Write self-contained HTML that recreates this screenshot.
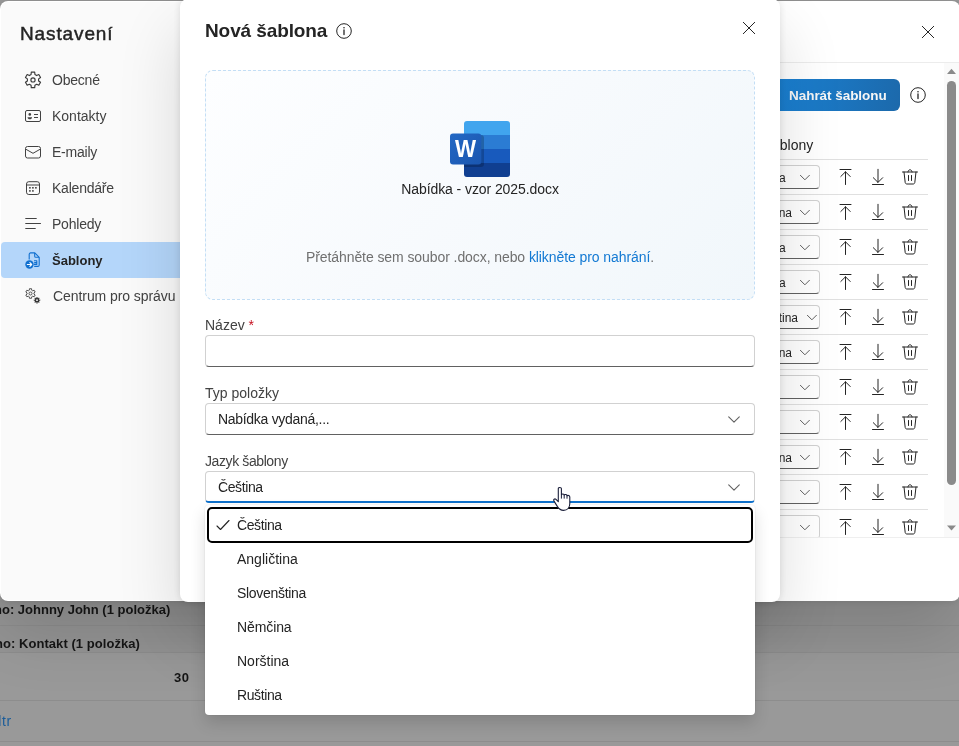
<!DOCTYPE html>
<html lang="cs">
<head>
<meta charset="utf-8">
<title>Nastavení – Nová šablona</title>
<style>
*{box-sizing:border-box;margin:0;padding:0}
html,body{width:959px;height:746px;overflow:hidden}
body{position:relative;font-family:"Liberation Sans",sans-serif;font-size:14px;color:#242424;background:#949494}
.abs{position:absolute}
.t{position:absolute;white-space:nowrap;line-height:1;will-change:transform}
/* background page */
#bg{position:absolute;left:0;top:0;width:959px;height:746px;background:#999}
.bgline{position:absolute;left:0;width:959px;height:1px;background:#8d8d8d}
/* settings dialog */
#settings{position:absolute;left:0;top:1px;width:960px;height:600px;border-radius:8px;background:#fff;overflow:hidden;box-shadow:0 0 8px rgba(0,0,0,.12),0 32px 64px rgba(0,0,0,.14)}
#side{position:absolute;left:1px;top:1px;width:230px;height:598px;background:#fafafa;border-radius:7px 0 0 7px}
.nav{position:absolute;left:0;width:230px;height:36px}
.nav svg{position:absolute;left:23px;top:8px;width:20px;height:20px}
.nav .t{left:52px;top:11px;font-size:14px;color:#424242;letter-spacing:-.22px}
.nav.sel{left:1px;background:#b4d6fa;border-radius:4px 0 0 4px}
.nav.sel .t{color:#242424;font-weight:bold;left:51px;font-size:13px;letter-spacing:0;top:12px}
.nav.sel svg{left:22px}
/* right panel */
.rowline{position:absolute;left:700px;width:228px;height:1px;background:#e0e0e0}
.sel2{position:absolute;left:700px;width:120px;height:24px;border:1px solid #d1d1d1;border-bottom-color:#616161;border-radius:4px;background:#fff}
.sel2 .t{top:6px;font-size:12px;color:#242424}
.sel2 svg{position:absolute;right:6px;top:5px;width:14px;height:14px}
.ic{position:absolute;width:20px;height:20px}
/* front dialog */
#dlg{position:absolute;left:180px;top:-1px;width:600px;height:603px;border-radius:8px;background:#fff;box-shadow:0 0 8px rgba(0,0,0,.12),0 32px 64px rgba(0,0,0,.14)}
#drop{position:absolute;left:205px;top:70px;width:550px;height:230px;border:1px dashed #c3def5;border-radius:8px;background:linear-gradient(135deg,#fdfeff 0%,#f7fafd 50%,#f1f7fb 100%)}
.lbl{font-size:14px;color:#424242}
.field{position:absolute;left:205px;width:550px;height:32px;border:1px solid #d1d1d1;border-bottom-color:#616161;border-radius:4px;background:#fff}
.field .t{left:12px;top:8px;font-size:14px;color:#242424}
.field svg{position:absolute;right:10px;top:6px;width:20px;height:20px}
#list{position:absolute;left:205px;top:505px;width:550px;height:210px;border-radius:4px;background:#fff;box-shadow:0 0 2px rgba(0,0,0,.12),0 8px 16px rgba(0,0,0,.14)}
.opt{will-change:transform;position:absolute;left:32px;font-size:14px;color:#242424;white-space:nowrap;line-height:1}
</style>
</head>
<body>
<div id="bg">
  <div class="abs" style="left:0;top:600px;width:959px;height:52px;background:#949494"></div>
  <div class="bgline" style="top:625px"></div>
  <div class="bgline" style="top:652px"></div>
  <div class="bgline" style="top:700px"></div>
  <div class="bgline" style="top:741px"></div>
  <div class="t" style="left:-6px;top:603px;font-size:13px;font-weight:bold;color:#161616">ho: Johnny John (1 položka)</div>
  <div class="t" style="left:-4.700px;top:637px;font-size:13px;font-weight:bold;color:#161616;letter-spacing:.05px">ho: Kontakt (1 položka)</div>
  <div class="t" style="left:174px;top:671px;font-size:13px;font-weight:bold;color:#161616;letter-spacing:.4px">30</div>
  <div class="t" style="left:-10px;top:714px;font-size:14px;color:#1a5c99;letter-spacing:.6px">filtr</div>
</div>

<div id="settings">
  <div id="side"></div>
  <div class="t" style="left:19.600px;top:23px;font-size:19px;letter-spacing:.88px;color:#242424;-webkit-text-stroke:.45px #242424">Nastavení</div>

  <div class="nav" style="top:61px"><svg viewBox="0 0 20 20" fill="none" stroke="#3a3a3a" stroke-width="1.150" stroke-linejoin="round"><path d="M8.28 2.19 L11.72 2.19 L11.93 4.54 L13.68 5.55 L15.82 4.55 L17.54 7.54 L15.61 8.89 L15.61 10.91 L17.54 12.26 L15.82 15.25 L13.68 14.25 L11.93 15.26 L11.72 17.61 L8.28 17.61 L8.07 15.26 L6.32 14.25 L4.18 15.25 L2.46 12.26 L4.39 10.91 L4.39 8.89 L2.46 7.54 L4.18 4.55 L6.32 5.55 L8.07 4.54Z"/><circle cx="10" cy="9.900" r="2.100"/></svg><div class="t">Obecné</div></div>
  <div class="nav" style="top:97px"><svg viewBox="0 0 20 20" fill="none" stroke="#424242" stroke-width="1"><rect x="2.500" y="4.500" width="15" height="11" rx="1.500"/><circle cx="6.800" cy="8.400" r="1.300" fill="#424242" stroke="none"/><path d="M4.600 11.300h4.400v.5c0 .9-1 1.500-2.200 1.500s-2.200-.600-2.200-1.500z" fill="#424242" stroke="none"/><path d="M11 8.500h4M11 11.500h4"/></svg><div class="t" style="left:52.400px;letter-spacing:0">Kontakty</div></div>
  <div class="nav" style="top:133px"><svg viewBox="0 0 20 20" fill="none" stroke="#424242" stroke-width="1" stroke-linejoin="round"><rect x="2.500" y="4.500" width="15" height="11.500" rx="2"/><path d="M2.800 7.200L10 11.300l7.200-4.100"/></svg><div class="t">E-maily</div></div>
  <div class="nav" style="top:169px"><svg viewBox="0 0 20 20" fill="none" stroke="#424242" stroke-width="1"><rect x="3.500" y="3.700" width="13" height="12.800" rx="2.300"/><path d="M3.500 7h13"/><g fill="#424242" stroke="none"><rect x="6.100" y="9" width="1.600" height="1.600"/><rect x="9.100" y="9" width="1.600" height="1.600"/><rect x="12.100" y="9" width="1.600" height="1.600"/><rect x="6.100" y="12.100" width="1.600" height="1.600"/><rect x="9.100" y="12.100" width="1.600" height="1.600"/></g></svg><div class="t">Kalendáře</div></div>
  <div class="nav" style="top:205px"><svg viewBox="0 0 20 20" fill="none" stroke="#424242" stroke-width="1" stroke-linecap="round"><path d="M2.700 4.500h10.600M2.700 9.500h14.800M2.700 14.500h9.600"/></svg><div class="t">Pohledy</div></div>
  <div class="nav sel" style="top:241px"><svg viewBox="0 0 20 20" fill="none" stroke="#1170cf" stroke-width="1.100" stroke-linejoin="round"><path d="M6.200 9.500V4.300c0-.8.600-1.400 1.400-1.400h4.200l4.400 4.400v7.700c0 .8-.600 1.400-1.400 1.400h-3.600"/><path d="M11.700 3v3.200c0 .6.500 1.100 1.100 1.100h3.200"/><path d="M11 10.800h2.800v3.600H11M11.200 12.600h2.400"/><circle cx="6.500" cy="14.500" r="4.200" fill="#1170cf" stroke="none"/><path d="M4.300 14.500h4.200M6.900 12.700l1.800 1.800-1.800 1.800" stroke="#fff" stroke-width="1.100" stroke-linecap="round"/></svg><div class="t">Šablony</div></div>
  <div class="nav" style="top:277px"><svg viewBox="0 0 20 20" fill="none" stroke="#424242" stroke-width=".9" stroke-linejoin="round"><path d="M6.43 2.72 L8.57 2.72 L8.69 4.21 L9.76 4.83 L11.11 4.18 L12.18 6.03 L10.94 6.88 L10.94 8.12 L12.18 8.97 L11.11 10.82 L9.76 10.17 L8.69 10.79 L8.57 12.28 L6.43 12.28 L6.31 10.79 L5.24 10.17 L3.89 10.82 L2.82 8.97 L4.06 8.12 L4.06 6.88 L2.82 6.03 L3.89 4.18 L5.24 4.83 L6.31 4.21Z"/><circle cx="7.500" cy="7.500" r="1.500"/><path d="M13.36 10.96 L14.64 10.96 L14.51 12.06 L15.15 12.32 L15.83 11.46 L16.74 12.37 L15.88 13.05 L16.14 13.69 L17.24 13.56 L17.24 14.84 L16.14 14.71 L15.88 15.35 L16.74 16.03 L15.83 16.94 L15.15 16.08 L14.51 16.34 L14.64 17.44 L13.36 17.44 L13.49 16.34 L12.85 16.08 L12.17 16.94 L11.26 16.03 L12.12 15.35 L11.86 14.71 L10.76 14.84 L10.76 13.56 L11.86 13.69 L12.12 13.05 L11.26 12.37 L12.17 11.46 L12.85 12.32 L13.49 12.06Z" fill="#333" stroke="none"/><circle cx="14" cy="14.200" r=".9" fill="#fafafa" stroke="none"/></svg><div class="t" style="left:53px;letter-spacing:-.07px">Centrum pro správu</div></div>

  <!-- right panel -->
  <svg class="ic" style="left:918px;top:21px" viewBox="0 0 20 20" fill="none" stroke="#242424" stroke-width="1" stroke-linecap="round"><path d="M4.300 4.300l11.400 11.400M15.700 4.300L4.300 15.700"/></svg>
  <div class="abs" style="left:700px;top:61px;width:260px;height:1px;background:#ececec"></div>
  <div class="abs" style="left:770px;top:78px;width:130px;height:32px;border-radius:6px;background:linear-gradient(100deg,#1a82d6 0%,#1b7bc9 30%,#1c69ab 100%)"></div>
  <div class="t" style="left:789px;top:87.500px;font-size:13.500px;font-weight:bold;color:#f6f6f6;letter-spacing:-.04px">Nahrát šablonu</div>
  <svg class="ic" style="left:908px;top:84px" viewBox="0 0 20 20" fill="none" stroke="#242424" stroke-width="1"><circle cx="10" cy="10" r="7.300"/><path d="M10 9v4.500" stroke-width="1.300" stroke-linecap="round"/><circle cx="10" cy="6.700" r=".8" fill="#242424" stroke="none"/></svg>
  <div class="t" style="left:765px;top:137px;font-size:14px;color:#242424">šablony</div>

  <!-- scrollbar -->
  <div class="abs" style="left:944px;top:62px;width:16px;height:474px;background:#fafafa"></div>
  <div class="abs" style="left:947px;top:80px;width:9px;height:404px;border-radius:5px;background:#8a8a8a"></div>
  <svg class="abs" style="left:946px;top:67px;width:11px;height:7px" viewBox="0 0 11 7"><path d="M1 6L5.500 .8 10 6z" fill="#8a8a8a"/></svg>
  <svg class="abs" style="left:946px;top:523.600px;width:11px;height:7px" viewBox="0 0 11 7"><path d="M1 .4L5.500 5.600 10 .4z" fill="#8a8a8a"/></svg>

  <div id="rows">
  <div class="rowline" style="top:158px"></div>
  <div class="sel2" style="top:164px"><div class="t" style="right:33.5px">Čeština</div><svg viewBox="0 0 14 14" fill="none" stroke="#616161" stroke-width="1" stroke-linecap="round" stroke-linejoin="round"><path d="M1.400 4.300l4.500 4.500 4.500-4.500"/></svg></div>
  <svg class="ic" style="left:835px;top:166px" viewBox="0 0 20 20" fill="none" stroke="#242424" stroke-width="1" stroke-linecap="round" stroke-linejoin="round"><path d="M5 2.500h11M10.500 17.500V4.800M5.800 9.500l4.700-4.700 4.700 4.700"/></svg><svg class="ic" style="left:868px;top:166px" viewBox="0 0 20 20" fill="none" stroke="#242424" stroke-width="1" stroke-linecap="round" stroke-linejoin="round"><path d="M4.500 17.500h11M10 2.300v13M5.300 10.700l4.700 4.700 4.700-4.700"/></svg><svg class="ic" style="left:900px;top:166px" viewBox="0 0 20 20" fill="none" stroke="#242424" stroke-width="1" stroke-linecap="round" stroke-linejoin="round"><path d="M2.500 5h15M8 5c0-1.300.8-2.200 2-2.200s2 .9 2 2.200M4 5l1.200 10.500c.1.900.8 1.500 1.700 1.500h6.200c.9 0 1.600-.600 1.700-1.500L16 5M8.500 8.500v5M11.500 8.500v5"/></svg>
  <div class="rowline" style="top:193px"></div>
  <div class="sel2" style="top:199px"><div class="t" style="right:27.2px">Angličtina</div><svg viewBox="0 0 14 14" fill="none" stroke="#616161" stroke-width="1" stroke-linecap="round" stroke-linejoin="round"><path d="M1.400 4.300l4.500 4.500 4.500-4.500"/></svg></div>
  <svg class="ic" style="left:835px;top:201px" viewBox="0 0 20 20" fill="none" stroke="#242424" stroke-width="1" stroke-linecap="round" stroke-linejoin="round"><path d="M5 2.500h11M10.500 17.500V4.800M5.800 9.500l4.700-4.700 4.700 4.700"/></svg><svg class="ic" style="left:868px;top:201px" viewBox="0 0 20 20" fill="none" stroke="#242424" stroke-width="1" stroke-linecap="round" stroke-linejoin="round"><path d="M4.500 17.500h11M10 2.300v13M5.300 10.700l4.700 4.700 4.700-4.700"/></svg><svg class="ic" style="left:900px;top:201px" viewBox="0 0 20 20" fill="none" stroke="#242424" stroke-width="1" stroke-linecap="round" stroke-linejoin="round"><path d="M2.500 5h15M8 5c0-1.300.8-2.200 2-2.200s2 .9 2 2.200M4 5l1.200 10.500c.1.900.8 1.500 1.700 1.500h6.200c.9 0 1.600-.600 1.700-1.500L16 5M8.500 8.500v5M11.500 8.500v5"/></svg>
  <div class="rowline" style="top:228px"></div>
  <div class="sel2" style="top:234px"><div class="t" style="right:33.5px">Čeština</div><svg viewBox="0 0 14 14" fill="none" stroke="#616161" stroke-width="1" stroke-linecap="round" stroke-linejoin="round"><path d="M1.400 4.300l4.500 4.500 4.500-4.500"/></svg></div>
  <svg class="ic" style="left:835px;top:236px" viewBox="0 0 20 20" fill="none" stroke="#242424" stroke-width="1" stroke-linecap="round" stroke-linejoin="round"><path d="M5 2.500h11M10.500 17.500V4.800M5.800 9.500l4.700-4.700 4.700 4.700"/></svg><svg class="ic" style="left:868px;top:236px" viewBox="0 0 20 20" fill="none" stroke="#242424" stroke-width="1" stroke-linecap="round" stroke-linejoin="round"><path d="M4.500 17.500h11M10 2.300v13M5.300 10.700l4.700 4.700 4.700-4.700"/></svg><svg class="ic" style="left:900px;top:236px" viewBox="0 0 20 20" fill="none" stroke="#242424" stroke-width="1" stroke-linecap="round" stroke-linejoin="round"><path d="M2.500 5h15M8 5c0-1.300.8-2.200 2-2.200s2 .9 2 2.200M4 5l1.200 10.500c.1.900.8 1.500 1.700 1.500h6.200c.9 0 1.600-.600 1.700-1.500L16 5M8.500 8.500v5M11.500 8.500v5"/></svg>
  <div class="rowline" style="top:263px"></div>
  <div class="sel2" style="top:269px"><div class="t" style="right:33.5px">Čeština</div><svg viewBox="0 0 14 14" fill="none" stroke="#616161" stroke-width="1" stroke-linecap="round" stroke-linejoin="round"><path d="M1.400 4.300l4.500 4.500 4.500-4.500"/></svg></div>
  <svg class="ic" style="left:835px;top:271px" viewBox="0 0 20 20" fill="none" stroke="#242424" stroke-width="1" stroke-linecap="round" stroke-linejoin="round"><path d="M5 2.500h11M10.500 17.500V4.800M5.800 9.500l4.700-4.700 4.700 4.700"/></svg><svg class="ic" style="left:868px;top:271px" viewBox="0 0 20 20" fill="none" stroke="#242424" stroke-width="1" stroke-linecap="round" stroke-linejoin="round"><path d="M4.500 17.500h11M10 2.300v13M5.300 10.700l4.700 4.700 4.700-4.700"/></svg><svg class="ic" style="left:900px;top:271px" viewBox="0 0 20 20" fill="none" stroke="#242424" stroke-width="1" stroke-linecap="round" stroke-linejoin="round"><path d="M2.500 5h15M8 5c0-1.300.8-2.200 2-2.200s2 .9 2 2.200M4 5l1.200 10.500c.1.900.8 1.500 1.700 1.500h6.200c.9 0 1.600-.600 1.700-1.500L16 5M8.500 8.500v5M11.500 8.500v5"/></svg>
  <div class="rowline" style="top:298px"></div>
  <div class="sel2" style="top:304px"><div class="t" style="right:21px">Slovenština</div><svg style="right:-1px" viewBox="0 0 14 14" fill="none" stroke="#616161" stroke-width="1" stroke-linecap="round" stroke-linejoin="round"><path d="M1.400 4.300l4.500 4.500 4.500-4.500"/></svg></div>
  <svg class="ic" style="left:835px;top:306px" viewBox="0 0 20 20" fill="none" stroke="#242424" stroke-width="1" stroke-linecap="round" stroke-linejoin="round"><path d="M5 2.500h11M10.500 17.500V4.800M5.800 9.500l4.700-4.700 4.700 4.700"/></svg><svg class="ic" style="left:868px;top:306px" viewBox="0 0 20 20" fill="none" stroke="#242424" stroke-width="1" stroke-linecap="round" stroke-linejoin="round"><path d="M4.500 17.500h11M10 2.300v13M5.300 10.700l4.700 4.700 4.700-4.700"/></svg><svg class="ic" style="left:900px;top:306px" viewBox="0 0 20 20" fill="none" stroke="#242424" stroke-width="1" stroke-linecap="round" stroke-linejoin="round"><path d="M2.500 5h15M8 5c0-1.300.8-2.200 2-2.200s2 .9 2 2.200M4 5l1.200 10.500c.1.900.8 1.500 1.700 1.500h6.200c.9 0 1.600-.600 1.700-1.500L16 5M8.500 8.500v5M11.500 8.500v5"/></svg>
  <div class="rowline" style="top:333px"></div>
  <div class="sel2" style="top:339px"><div class="t" style="right:27.2px">Angličtina</div><svg viewBox="0 0 14 14" fill="none" stroke="#616161" stroke-width="1" stroke-linecap="round" stroke-linejoin="round"><path d="M1.400 4.300l4.500 4.500 4.500-4.500"/></svg></div>
  <svg class="ic" style="left:835px;top:341px" viewBox="0 0 20 20" fill="none" stroke="#242424" stroke-width="1" stroke-linecap="round" stroke-linejoin="round"><path d="M5 2.500h11M10.500 17.500V4.800M5.800 9.500l4.700-4.700 4.700 4.700"/></svg><svg class="ic" style="left:868px;top:341px" viewBox="0 0 20 20" fill="none" stroke="#242424" stroke-width="1" stroke-linecap="round" stroke-linejoin="round"><path d="M4.500 17.500h11M10 2.300v13M5.300 10.700l4.700 4.700 4.700-4.700"/></svg><svg class="ic" style="left:900px;top:341px" viewBox="0 0 20 20" fill="none" stroke="#242424" stroke-width="1" stroke-linecap="round" stroke-linejoin="round"><path d="M2.500 5h15M8 5c0-1.300.8-2.200 2-2.200s2 .9 2 2.200M4 5l1.200 10.500c.1.900.8 1.500 1.700 1.500h6.200c.9 0 1.600-.600 1.700-1.500L16 5M8.500 8.500v5M11.500 8.500v5"/></svg>
  <div class="rowline" style="top:368px"></div>
  <div class="sel2" style="top:374px"><svg viewBox="0 0 14 14" fill="none" stroke="#616161" stroke-width="1" stroke-linecap="round" stroke-linejoin="round"><path d="M1.400 4.300l4.500 4.500 4.500-4.500"/></svg></div>
  <svg class="ic" style="left:835px;top:376px" viewBox="0 0 20 20" fill="none" stroke="#242424" stroke-width="1" stroke-linecap="round" stroke-linejoin="round"><path d="M5 2.500h11M10.500 17.500V4.800M5.800 9.500l4.700-4.700 4.700 4.700"/></svg><svg class="ic" style="left:868px;top:376px" viewBox="0 0 20 20" fill="none" stroke="#242424" stroke-width="1" stroke-linecap="round" stroke-linejoin="round"><path d="M4.500 17.500h11M10 2.300v13M5.300 10.700l4.700 4.700 4.700-4.700"/></svg><svg class="ic" style="left:900px;top:376px" viewBox="0 0 20 20" fill="none" stroke="#242424" stroke-width="1" stroke-linecap="round" stroke-linejoin="round"><path d="M2.500 5h15M8 5c0-1.300.8-2.200 2-2.200s2 .9 2 2.200M4 5l1.200 10.500c.1.900.8 1.500 1.700 1.500h6.200c.9 0 1.600-.600 1.700-1.500L16 5M8.500 8.500v5M11.500 8.500v5"/></svg>
  <div class="rowline" style="top:403px"></div>
  <div class="sel2" style="top:409px"><svg viewBox="0 0 14 14" fill="none" stroke="#616161" stroke-width="1" stroke-linecap="round" stroke-linejoin="round"><path d="M1.400 4.300l4.500 4.500 4.500-4.500"/></svg></div>
  <svg class="ic" style="left:835px;top:411px" viewBox="0 0 20 20" fill="none" stroke="#242424" stroke-width="1" stroke-linecap="round" stroke-linejoin="round"><path d="M5 2.500h11M10.500 17.500V4.800M5.800 9.500l4.700-4.700 4.700 4.700"/></svg><svg class="ic" style="left:868px;top:411px" viewBox="0 0 20 20" fill="none" stroke="#242424" stroke-width="1" stroke-linecap="round" stroke-linejoin="round"><path d="M4.500 17.500h11M10 2.300v13M5.300 10.700l4.700 4.700 4.700-4.700"/></svg><svg class="ic" style="left:900px;top:411px" viewBox="0 0 20 20" fill="none" stroke="#242424" stroke-width="1" stroke-linecap="round" stroke-linejoin="round"><path d="M2.500 5h15M8 5c0-1.300.8-2.200 2-2.200s2 .9 2 2.200M4 5l1.200 10.500c.1.900.8 1.500 1.700 1.500h6.200c.9 0 1.600-.600 1.700-1.500L16 5M8.500 8.500v5M11.500 8.500v5"/></svg>
  <div class="rowline" style="top:438px"></div>
  <div class="sel2" style="top:444px"><div class="t" style="right:27.2px">Angličtina</div><svg viewBox="0 0 14 14" fill="none" stroke="#616161" stroke-width="1" stroke-linecap="round" stroke-linejoin="round"><path d="M1.400 4.300l4.500 4.500 4.500-4.500"/></svg></div>
  <svg class="ic" style="left:835px;top:446px" viewBox="0 0 20 20" fill="none" stroke="#242424" stroke-width="1" stroke-linecap="round" stroke-linejoin="round"><path d="M5 2.500h11M10.500 17.500V4.800M5.800 9.500l4.700-4.700 4.700 4.700"/></svg><svg class="ic" style="left:868px;top:446px" viewBox="0 0 20 20" fill="none" stroke="#242424" stroke-width="1" stroke-linecap="round" stroke-linejoin="round"><path d="M4.500 17.500h11M10 2.300v13M5.300 10.700l4.700 4.700 4.700-4.700"/></svg><svg class="ic" style="left:900px;top:446px" viewBox="0 0 20 20" fill="none" stroke="#242424" stroke-width="1" stroke-linecap="round" stroke-linejoin="round"><path d="M2.500 5h15M8 5c0-1.300.8-2.200 2-2.200s2 .9 2 2.200M4 5l1.200 10.500c.1.900.8 1.500 1.700 1.500h6.200c.9 0 1.600-.600 1.700-1.500L16 5M8.500 8.500v5M11.500 8.500v5"/></svg>
  <div class="rowline" style="top:473px"></div>
  <div class="sel2" style="top:479px"><svg viewBox="0 0 14 14" fill="none" stroke="#616161" stroke-width="1" stroke-linecap="round" stroke-linejoin="round"><path d="M1.400 4.300l4.500 4.500 4.500-4.500"/></svg></div>
  <svg class="ic" style="left:835px;top:481px" viewBox="0 0 20 20" fill="none" stroke="#242424" stroke-width="1" stroke-linecap="round" stroke-linejoin="round"><path d="M5 2.500h11M10.500 17.500V4.800M5.800 9.500l4.700-4.700 4.700 4.700"/></svg><svg class="ic" style="left:868px;top:481px" viewBox="0 0 20 20" fill="none" stroke="#242424" stroke-width="1" stroke-linecap="round" stroke-linejoin="round"><path d="M4.500 17.500h11M10 2.300v13M5.300 10.700l4.700 4.700 4.700-4.700"/></svg><svg class="ic" style="left:900px;top:481px" viewBox="0 0 20 20" fill="none" stroke="#242424" stroke-width="1" stroke-linecap="round" stroke-linejoin="round"><path d="M2.500 5h15M8 5c0-1.300.8-2.200 2-2.200s2 .9 2 2.200M4 5l1.200 10.500c.1.900.8 1.500 1.700 1.500h6.200c.9 0 1.600-.600 1.700-1.500L16 5M8.500 8.500v5M11.500 8.500v5"/></svg>
  <div class="rowline" style="top:508px"></div>
  <div class="sel2" style="top:514px"><svg viewBox="0 0 14 14" fill="none" stroke="#616161" stroke-width="1" stroke-linecap="round" stroke-linejoin="round"><path d="M1.400 4.300l4.500 4.500 4.500-4.500"/></svg></div>
  <svg class="ic" style="left:835px;top:516px" viewBox="0 0 20 20" fill="none" stroke="#242424" stroke-width="1" stroke-linecap="round" stroke-linejoin="round"><path d="M5 2.500h11M10.500 17.500V4.800M5.800 9.500l4.700-4.700 4.700 4.700"/></svg><svg class="ic" style="left:868px;top:516px" viewBox="0 0 20 20" fill="none" stroke="#242424" stroke-width="1" stroke-linecap="round" stroke-linejoin="round"><path d="M4.500 17.500h11M10 2.300v13M5.300 10.700l4.700 4.700 4.700-4.700"/></svg><svg class="ic" style="left:900px;top:516px" viewBox="0 0 20 20" fill="none" stroke="#242424" stroke-width="1" stroke-linecap="round" stroke-linejoin="round"><path d="M2.500 5h15M8 5c0-1.300.8-2.200 2-2.200s2 .9 2 2.200M4 5l1.200 10.500c.1.900.8 1.500 1.700 1.500h6.200c.9 0 1.600-.600 1.700-1.500L16 5M8.500 8.500v5M11.500 8.500v5"/></svg>
  </div><!--/rows-->
  <div class="abs" style="left:700px;top:536px;width:260px;height:12px;background:#fff;border-top:1px solid #efefef"></div>
</div>

<div id="dlg"></div>
<div class="t" style="left:205px;top:21px;font-size:19px;letter-spacing:-.1px;font-weight:bold;color:#242424">Nová šablona</div>
<svg class="ic" style="left:334px;top:21px" viewBox="0 0 20 20" fill="none" stroke="#242424" stroke-width="1"><circle cx="10" cy="10" r="7.300"/><path d="M10 9v4.500" stroke-width="1.300" stroke-linecap="round"/><circle cx="10" cy="6.700" r=".8" fill="#242424" stroke="none"/></svg>
<svg class="ic" style="left:739px;top:18px" viewBox="0 0 20 20" fill="none" stroke="#242424" stroke-width="1" stroke-linecap="round"><path d="M4.300 4.300l11.400 11.400M15.700 4.300L4.300 15.700"/></svg>

<div id="drop"></div>
<!-- word icon -->
<svg class="abs" style="left:448px;top:119px;width:64px;height:60px" viewBox="0 0 64 60">
  <defs><clipPath id="pg"><rect x="16" y="2" width="46" height="56" rx="3"/></clipPath>
  <linearGradient id="wg" x1="0" y1="0" x2="1" y2="1"><stop offset="0" stop-color="#2368c4"/><stop offset="1" stop-color="#1a56b0"/></linearGradient></defs>
  <g clip-path="url(#pg)"><rect x="16" y="2" width="46" height="14" fill="#41a5ee"/><rect x="16" y="16" width="46" height="14" fill="#2b7cd3"/><rect x="16" y="30" width="46" height="14" fill="#185abd"/><rect x="16" y="44" width="46" height="14" fill="#103f91"/></g>
  <g clip-path="url(#pg)"><rect x="3" y="16" width="33" height="32" rx="3" fill="#000" opacity=".2"/></g>
  <rect x="2" y="14.500" width="31.300" height="31" rx="3" fill="url(#wg)"/>
  <text transform="translate(17.600,37.700) scale(.95,1)" x="0" y="0" text-anchor="middle" font-family="Liberation Sans, sans-serif" font-weight="bold" font-size="23.500" fill="#fff">W</text>
</svg>
<div class="t" style="left:205px;width:550px;text-align:center;top:182px;font-size:14px;letter-spacing:-.08px;color:#242424">Nabídka - vzor 2025.docx</div>
<div class="t" style="left:205px;width:550px;text-align:center;top:250px;font-size:14px;letter-spacing:-.08px;color:#707070">Přetáhněte sem soubor .docx, nebo <span style="color:#1279d3">klikněte pro nahrání</span>.</div>

<div class="t lbl" style="left:205px;top:318px">Název <span style="color:#c50f1f">*</span></div>
<div class="field" style="top:335px"></div>
<div class="t lbl" style="left:205px;top:386px">Typ položky</div>
<div class="field" style="top:403px"><div class="t" style="letter-spacing:-.3px">Nabídka vydaná,...</div><svg viewBox="0 0 20 20" fill="none" stroke="#616161" stroke-width="1.100" stroke-linecap="round" stroke-linejoin="round"><path d="M4.700 6.900l5.300 5.300 5.300-5.300"/></svg></div>
<div class="t lbl" style="left:205px;top:454px;letter-spacing:-.4px">Jazyk šablony</div>
<div class="field" style="top:471px;border-bottom:2px solid #0f71cc"><div class="t" style="letter-spacing:-.4px">Čeština</div><svg viewBox="0 0 20 20" fill="none" stroke="#616161" stroke-width="1.100" stroke-linecap="round" stroke-linejoin="round"><path d="M4.700 6.900l5.300 5.300 5.300-5.300"/></svg></div>

<div id="list">
  <div class="abs" style="left:2px;top:2px;width:546px;height:36px;border:2px solid #000;border-radius:5px"></div>
  <svg class="abs" style="left:10px;top:12px;width:16px;height:16px" viewBox="0 0 16 16" fill="none" stroke="#242424" stroke-width="1.100" stroke-linecap="round" stroke-linejoin="round"><path d="M2 9l3.500 3.500L14 3.500"/></svg>
  <div class="opt" style="top:13px;letter-spacing:-.4px">Čeština</div>
  <div class="opt" style="top:47px">Angličtina</div>
  <div class="opt" style="top:81px;letter-spacing:-.3px">Slovenština</div>
  <div class="opt" style="top:115px;letter-spacing:-.1px">Němčina</div>
  <div class="opt" style="top:149px">Norština</div>
  <div class="opt" style="top:183px;letter-spacing:-.4px">Ruština</div>
</div>

<!-- mouse pointer -->
<svg class="abs" style="left:552px;top:486px;width:21px;height:26px" viewBox="0 0 21 26"><path d="M6.300 2.600c0-1.500 3.100-1.500 3.100 0v6c.6-1 2.700-.8 2.800.4.700-.9 2.700-.5 2.800.7.900-.7 2.800-.2 2.800 1.300v6.500c0 4-2.400 6.900-6.300 6.900-3.100 0-4.500-1.400-6.200-4L1.900 14.900c-.9-1.300.8-2.700 2.100-1.500l2.300 2.300z" fill="#fff" stroke="#1b1f3a" stroke-width="1.100" stroke-linejoin="round"/><path d="M9.400 8.600v4M12.200 9v3.600M15 9.700v3" stroke="#1b1f3a" stroke-width="1" fill="none"/></svg>

</body>
</html>
